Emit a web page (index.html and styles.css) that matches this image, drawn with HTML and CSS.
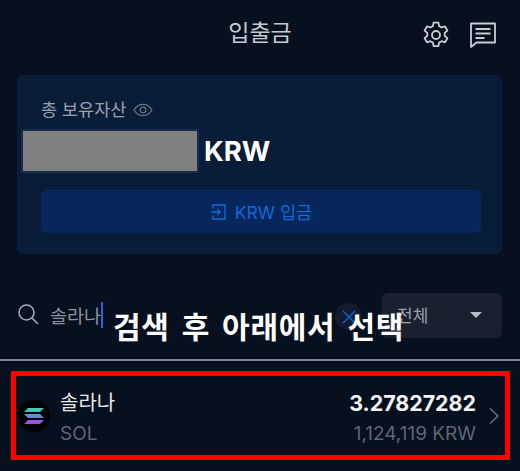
FILE: index.html
```html
<!DOCTYPE html>
<html lang="ko">
<head>
<meta charset="utf-8">
<title>입출금</title>
<link rel="stylesheet" href="styles.css">
</head>
<body>
<main class="page">
  <header class="top">
    <h1 class="title">입출금</h1>
    <div class="top-icons">
      <svg class="icon-gear" width="30" height="30" viewBox="0 0 30 30" fill="none" stroke="#c9ced4" stroke-width="1.8" stroke-linejoin="round">
        <path d="M12.6 2.6h4.8l.7 3.5 2.5 1.4 3.4-1.1 2.4 4.1-2.7 2.4v2.9l2.7 2.4-2.4 4.1-3.4-1.1-2.5 1.4-.7 3.5h-4.8l-.7-3.5-2.5-1.4-3.4 1.1-2.4-4.1 2.7-2.4v-2.9L3.6 10.500 6 6.400l3.400 1.100 2.500-1.400z"/>
        <circle cx="15" cy="15" r="4"/>
      </svg>
      <svg class="icon-chat" width="28" height="28" viewBox="0 0 28 28" fill="none" stroke="#c9ced4" stroke-width="1.8">
        <path d="M2 2.500h24v19H7.500L2 26z" stroke-linejoin="round"/>
        <path d="M6.500 8h15M6.500 12.500h15M6.500 17h9"/>
      </svg>
    </div>
  </header>

  <section class="card">
    <div class="total-label">
      <span>총 보유자산</span>
      <svg width="20" height="14" viewBox="0 0 20 14" fill="none" stroke="#6f7884" stroke-width="1.2">
        <path d="M1 7c2.400-3.800 5.400-5.600 9-5.600s6.600 1.800 9 5.600c-2.400 3.800-5.400 5.600-9 5.600S3.400 10.800 1 7z"/>
        <circle cx="10" cy="7" r="2.800"/>
      </svg>
    </div>
    <div class="total-row">
      <div class="redacted"></div>
      <span class="currency">KRW</span>
    </div>
    <button class="deposit" type="button">
      <svg width="16" height="16" viewBox="0 0 16 16" fill="none" stroke="#1268d8" stroke-width="1.400">
        <path d="M3 4.500V1h12v14H3v-3.500"/>
        <path d="M1 8h9M7 4.800 10.200 8 7 11.200"/>
      </svg>
      <span>KRW 입금</span>
    </button>
  </section>

  <section class="search-row">
    <svg class="search-icon" width="22" height="22" viewBox="0 0 22 22" fill="none" stroke="#a4a9b0" stroke-width="1.600">
      <circle cx="9.500" cy="9.500" r="7.500"/>
      <path d="M15 15l6 6"/>
    </svg>
    <span class="query">솔라나</span>
    <span class="caret"></span>
    <span class="clear">
      <svg width="14" height="14" viewBox="0 0 14 14" fill="none" stroke="#0f5fd0" stroke-width="1.500"><path d="M1 1l12 12M13 1 1 13"/></svg>
    </span>
    <div class="select">
      <span>전체</span>
      <span class="arrow"></span>
    </div>
    <div class="caption">검색 후 아래에서 선택</div>
  </section>

  <div class="divider"></div>

  <section class="asset">
    <svg class="coin" width="32" height="32" viewBox="0 0 32 32">
      <defs>
        <linearGradient id="sol" x1="0" y1="0" x2="0" y2="1">
          <stop offset="0" stop-color="#3ad6b4"/>
          <stop offset="0.5" stop-color="#5f8fd8"/>
          <stop offset="1" stop-color="#a93ff0"/>
        </linearGradient>
      </defs>
      <circle cx="16" cy="16" r="16" fill="#000"/>
      <path fill="url(#sol)" d="M10 8h16l-4 4H6zM6 14h16l4 4H10zM10 20h16l-4 4H6z"/>
    </svg>
    <div class="asset-name">
      <div class="name">솔라나</div>
      <div class="symbol">SOL</div>
    </div>
    <div class="asset-amount">
      <div class="qty">3.27827282</div>
      <div class="value">1,124,119 KRW</div>
    </div>
    <svg class="chevron" width="12" height="18" viewBox="0 0 12 18" fill="none" stroke="#6b7380" stroke-width="1.500"><path d="M2 1.500 10 9l-8 7.500"/></svg>
  </section>
</main>
</body>
</html>
```

FILE: styles.css
```css
* { box-sizing: border-box; }
html, body { margin: 0; padding: 0; }
body {
  width: 520px;
  height: 471px;
  overflow: hidden;
  background: #06101f;
  font-family: "Inter", "Noto Sans CJK KR", sans-serif;
  color: #fff;
}
.page { display: flex; flex-direction: column; height: 471px; }

.top {
  height: 75px;
  flex: none;
  display: flex;
  align-items: flex-start;
  justify-content: center;
  position: relative;
}
.title {
  margin: 17px 0 0;
  font-size: 23px;
  line-height: 32px;
  font-weight: 400;
  color: #c5cad0;
}
.top-icons {
  position: absolute;
  top: 20px;
  left: 421px;
  display: flex;
  gap: 18px;
  align-items: center;
}

.card {
  flex: none;
  margin: 0 18px 0 17px;
  height: 179px;
  background: #091d38;
  border-radius: 6px;
  padding: 23px 21px 0 24px;
}
.total-label {
  display: flex;
  align-items: center;
  gap: 7px;
  font-size: 17.500px;
  line-height: 24px;
  color: #9aa1aa;
}
.total-row {
  display: flex;
  align-items: center;
  gap: 5px;
  margin: 7px 0 0 -20px;
}
.redacted {
  width: 178px;
  height: 44px;
  background: #808080;
  border: 2px solid #162d50;
}
.currency {
  font-size: 27.500px;
  line-height: 44px;
  font-weight: 700;
  color: #fff;
}
.deposit {
  display: flex;
  align-items: center;
  justify-content: center;
  gap: 9px;
  width: 100%;
  height: 43px;
  margin-top: 17px;
  border: 0;
  border-radius: 6px;
  background: #07265b;
  color: #1268d8;
  font: inherit;
  font-size: 17.500px;
}

.search-row {
  flex: none;
  margin-top: 39px;
  height: 45px;
  padding: 0 18px 0 17px;
  display: flex;
  align-items: center;
  position: relative;
}
.search-icon { flex: none; margin-top: -3px; }
.query {
  margin-left: 11px;
  margin-top: -2px;
  font-size: 18.500px;
  color: #8d939c;
}
.caret {
  width: 2px;
  height: 26px;
  margin-top: -2px;
  background: #2f5fe0;
}
.clear {
  position: absolute;
  left: 335px;
  top: 10px;
  width: 27px;
  height: 27px;
  border-radius: 50%;
  background: #121c2c;
  display: flex;
  align-items: center;
  justify-content: center;
}
.select {
  margin-left: auto;
  width: 120px;
  height: 45px;
  background: #19212f;
  border-radius: 6px;
  display: flex;
  align-items: center;
  justify-content: space-between;
  padding: 0 20px 2px 15px;
  font-size: 17px;
  color: #9aa1aa;
}
.arrow {
  width: 0;
  height: 0;
  border-left: 6px solid transparent;
  border-right: 6px solid transparent;
  border-top: 6px solid #b9bdc3;
}
.caption {
  position: absolute;
  left: 113px;
  top: 12px;
  font-size: 30px;
  line-height: 40px;
  font-weight: 700;
  letter-spacing: 0.700px;
  word-spacing: 3px;
  white-space: nowrap;
  color: #fff;
  font-family: "Noto Sans CJK KR", sans-serif;
}

.divider {
  flex: none;
  height: 2px;
  margin-top: 21px;
  background: #7f848b;
}

.asset {
  flex: none;
  margin: 10px 10px 0 11px;
  height: 89px;
  border: 5px solid #ff0000;
  display: flex;
  align-items: center;
  padding: 0 5px 0 2px;
}
.coin { flex: none; }
.asset-name { margin-left: 10px; padding-top: 3px; }
.name { font-size: 20px; line-height: 28px; color: #e6e8eb; }
.symbol { font-size: 19px; line-height: 24px; margin-top: 5px; color: #5e6672; }
.asset-amount { margin-left: auto; text-align: right; padding-top: 3px; }
.qty { font-size: 21.400px; line-height: 28px; font-weight: 700; color: #f2f3f5; }
.value { font-size: 19px; line-height: 24px; margin-top: 5px; color: #5e6672; }
.chevron { margin-left: 12px; flex: none; }
```
